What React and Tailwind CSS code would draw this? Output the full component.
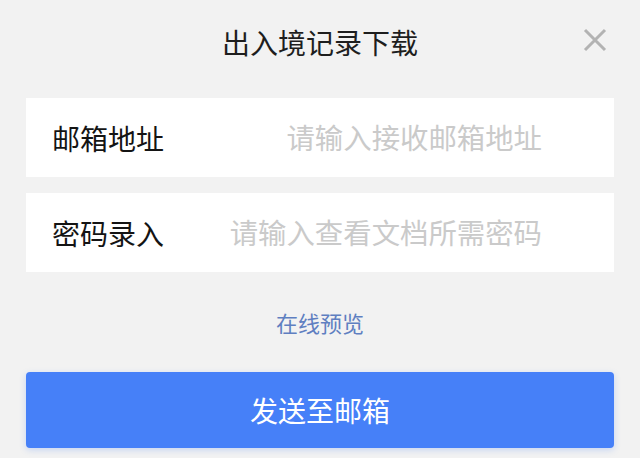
import React from "react";

const font = { fontFamily: '"Noto Sans CJK SC", "Noto Sans", sans-serif' };

function Field({ label, placeholder }) {
  return (
    <div className="flex h-[79px] items-center bg-white pl-[26px] pr-[72px]">
      <span className="shrink-0 text-[28px] leading-none text-[#141414]">{label}</span>
      <div className="ml-auto flex w-[310px] justify-end whitespace-nowrap">
        <span className="shrink-0 text-[28.4px] leading-none text-[#cacaca]">{placeholder}</span>
      </div>
    </div>
  );
}

export default function App() {
  return (
    <div className="h-[458px] w-[640px] overflow-hidden bg-[#f2f2f2] px-[26px]" style={font}>
      <div className="relative flex h-[84px] items-center justify-center">
        <h1 className="text-[28px] font-normal leading-none text-[#1e1e1e]">出入境记录下载</h1>
        <button className="absolute right-[6px] top-[27px] flex h-[26px] w-[26px] items-center justify-center">
          <svg width="24" height="24" viewBox="0 0 24 24" fill="none">
            <path d="M2 2L22 22M22 2L2 22" stroke="#b3b3b3" strokeWidth="3" strokeLinecap="butt" />
          </svg>
        </button>
      </div>
      <div className="mt-[14px] flex flex-col gap-[16px]">
        <Field label="邮箱地址" placeholder="请输入接收邮箱地址" />
        <Field label="密码录入" placeholder="请输入查看文档所需密码" />
      </div>
      <div className="flex h-[100px] items-center justify-center">
        <span className="text-[22px] leading-none text-[#5f7fc1]">在线预览</span>
      </div>
      <button className="flex h-[76px] w-full items-center justify-center rounded-[4px] bg-[#4680f8] text-[28px] leading-none text-white shadow-[0_2px_6px_rgba(70,128,248,0.25)]">
        发送至邮箱
      </button>
    </div>
  );
}
